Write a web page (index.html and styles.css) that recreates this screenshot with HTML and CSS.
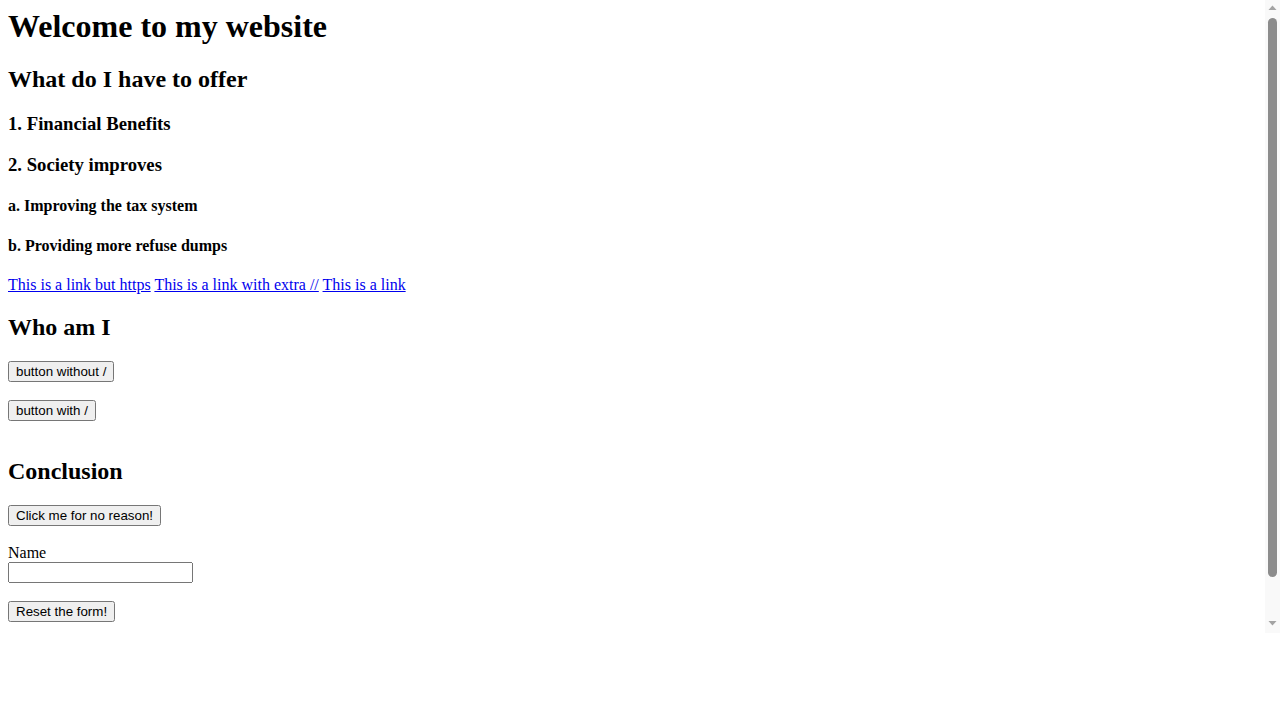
FILE: index.html
```html
<!DOCTYPE html>
<html lang="en">
<head>
<meta charset="utf-8">
<title>Welcome to my website</title>
<link rel="stylesheet" href="styles.css">
</head>
<body>
<div class="viewport">
  <main class="page">
    <h1 class="title">Welcome to my website</h1>
    <h2 class="heading">What do I have to offer</h2>
    <h3 class="sub">1. Financial Benefits</h3>
    <h3 class="sub">2. Society improves</h3>
    <h4 class="minor">a. Improving the tax system</h4>
    <h4 class="minor">b. Providing more refuse dumps</h4>
    <p class="links"><a class="link" href="#">This is a link but https</a> <a class="link" href="#">This is a link with extra //</a> <a class="link" href="#">This is a link</a></p>
    <h2 class="heading">Who am I</h2>
    <form class="form who">
      <p class="row"><button class="btn" type="button">button without /</button></p>
      <p class="row"><button class="btn" type="button">button with /</button></p>
    </form>
    <h2 class="heading">Conclusion</h2>
    <form class="form">
      <p class="row"><button class="btn" type="button">Click me for no reason!</button></p>
      <p class="row"><label class="label" for="name">Name</label><br><input class="field" id="name" type="text"></p>
      <p class="row"><button class="btn" type="reset">Reset the form!</button></p>
    </form>
  </main>
  <div class="scrollbar" aria-hidden="true">
    <svg class="sb-button" width="15" height="15" viewBox="0 0 15 15"><polygon points="3.5,10 11.5,10 7.5,5.5" fill="#a3a3a3"/></svg>
    <div class="sb-track"><div class="sb-thumb"></div></div>
    <svg class="sb-button" width="15" height="15" viewBox="0 0 15 15"><polygon points="3.5,3 11.5,3 7.5,7.5" fill="#a3a3a3"/></svg>
  </div>
</div>
</body>
</html>
```
FILE: styles.css
```css
html, body {
  margin: 0;
  padding: 0;
  background: #ffffff;
}

.viewport {
  height: 633px;
  display: flex;
  background: #ffffff;
}

.page {
  flex: 1;
  min-width: 0;
  overflow: hidden;
  padding: 8px;
  font-family: "Liberation Serif", "Times New Roman", serif;
  font-size: 16px;
  color: #000000;
}

.title {
  font-size: 2em;
  font-weight: bold;
  margin: 0 0 0.67em;
}

.heading {
  font-size: 1.5em;
  font-weight: bold;
  margin: 0.83em 0;
}

.sub {
  font-size: 1.17em;
  font-weight: bold;
  margin: 1em 0;
}

.minor {
  font-size: 1em;
  font-weight: bold;
  margin: 1.33em 0;
}

.links {
  margin: 1em 0;
}

.link {
  color: #0000ee;
  text-decoration: underline;
}

.form {
  margin: 0;
}

.who {
  margin-bottom: 37px;
}

.row {
  margin: 18px 0;
}

.btn {
  font-family: "Liberation Sans", Arial, sans-serif;
  font-size: 13.3333px;
}

.field {
  font-family: "Liberation Sans", Arial, sans-serif;
  font-size: 13.3333px;
}

.label {
  font-family: "Liberation Serif", "Times New Roman", serif;
}

.scrollbar {
  width: 15px;
  flex: none;
  display: flex;
  flex-direction: column;
  background: #f9f9f9;
}

.sb-button {
  display: block;
  flex: none;
}

.sb-track {
  flex: 1;
  display: flex;
  justify-content: center;
  padding-top: 3px;
}

.sb-thumb {
  width: 9px;
  height: 559px;
  border-radius: 4.5px;
  background: #8c8c8c;
}
```
